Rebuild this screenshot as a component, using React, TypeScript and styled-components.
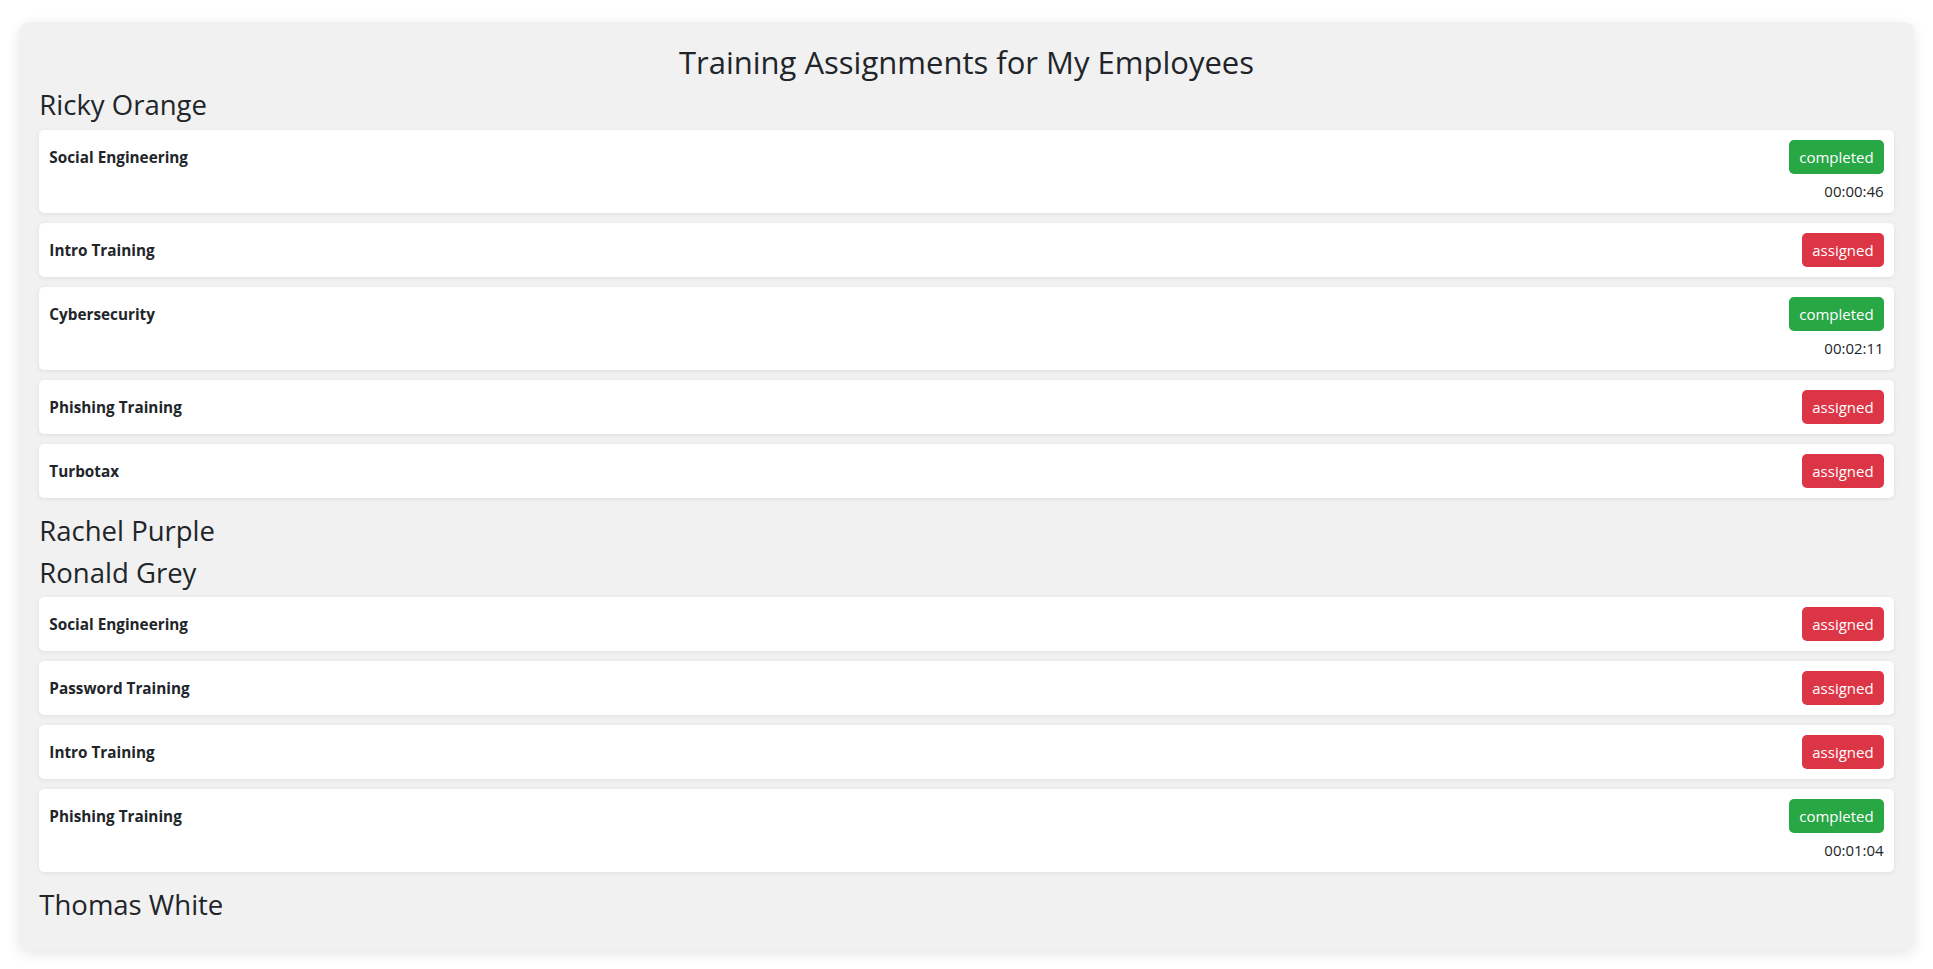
import React from "react";
import styled, { createGlobalStyle } from "styled-components";

const GlobalStyle = createGlobalStyle`
  html, body {
    margin: 0;
    padding: 0;
    background: #ffffff;
  }
  body {
    font-family: "Open Sans", "Noto Sans", "Liberation Sans", sans-serif;
    color: #212529;
  }
  * { box-sizing: border-box; }
`;

type Status = "completed" | "assigned";

interface Assignment {
  name: string;
  status: Status;
  time?: string;
}

interface Employee {
  name: string;
  assignments: Assignment[];
}

const employees: Employee[] = [
  {
    name: "Ricky Orange",
    assignments: [
      { name: "Social Engineering", status: "completed", time: "00:00:46" },
      { name: "Intro Training", status: "assigned" },
      { name: "Cybersecurity", status: "completed", time: "00:02:11" },
      { name: "Phishing Training", status: "assigned" },
      { name: "Turbotax", status: "assigned" },
    ],
  },
  { name: "Rachel Purple", assignments: [] },
  {
    name: "Ronald Grey",
    assignments: [
      { name: "Social Engineering", status: "assigned" },
      { name: "Password Training", status: "assigned" },
      { name: "Intro Training", status: "assigned" },
      { name: "Phishing Training", status: "completed", time: "00:01:04" },
    ],
  },
  { name: "Thomas White", assignments: [] },
];

const Panel = styled.main`
  width: 98%;
  margin: 22px auto 20px;
  padding: 20px;
  background: #f1f1f1;
  border-radius: 10px;
  box-shadow: 0 4px 14px rgba(0, 0, 0, 0.1);
`;

const Title = styled.h2`
  margin: 0 0 8px;
  padding-top: 1px;
  height: 38.4px;
  font-size: 31px;
  line-height: 38.4px;
  font-weight: 500;
  text-align: center;
`;

const EmployeeName = styled.h3`
  margin: 0 0 8px;
  font-size: 27.5px;
  line-height: 33.6px;
  font-weight: 500;
`;

const AssignmentList = styled.ul`
  list-style: none;
  margin: 0 0 16px;
  padding: 0;
  display: flex;
  flex-direction: column;
  gap: 10px;
`;

const AssignmentRow = styled.li`
  display: flex;
  justify-content: space-between;
  align-items: flex-start;
  padding: 10px;
  background: #ffffff;
  border-radius: 5px;
  box-shadow: 0 1px 4px rgba(0, 0, 0, 0.08);
`;

const AssignmentName = styled.span`
  font-size: 15.3px;
  font-weight: 700;
  line-height: 34px;
`;

const StatusColumn = styled.div`
  display: flex;
  flex-direction: column;
  align-items: flex-end;
`;

const StatusBadge = styled.span<{ $status: Status }>`
  display: inline-block;
  padding: 5px 10px;
  font-size: 15px;
  line-height: 24px;
  color: #ffffff;
  border-radius: 5px;
  background: ${(p) => (p.$status === "completed" ? "#28a745" : "#dc3545")};
`;

const Duration = styled.span`
  margin-top: 5px;
  font-size: 15px;
  line-height: 24px;
`;

export default function App() {
  return (
    <>
      <GlobalStyle />
      <Panel>
        <Title>Training Assignments for My Employees</Title>
        {employees.map((emp) => (
          <section key={emp.name}>
            <EmployeeName>{emp.name}</EmployeeName>
            {emp.assignments.length > 0 && (
              <AssignmentList>
                {emp.assignments.map((a, i) => (
                  <AssignmentRow key={i}>
                    <AssignmentName>{a.name}</AssignmentName>
                    <StatusColumn>
                      <StatusBadge $status={a.status}>{a.status}</StatusBadge>
                      {a.time && <Duration>{a.time}</Duration>}
                    </StatusColumn>
                  </AssignmentRow>
                ))}
              </AssignmentList>
            )}
          </section>
        ))}
      </Panel>
    </>
  );
}
